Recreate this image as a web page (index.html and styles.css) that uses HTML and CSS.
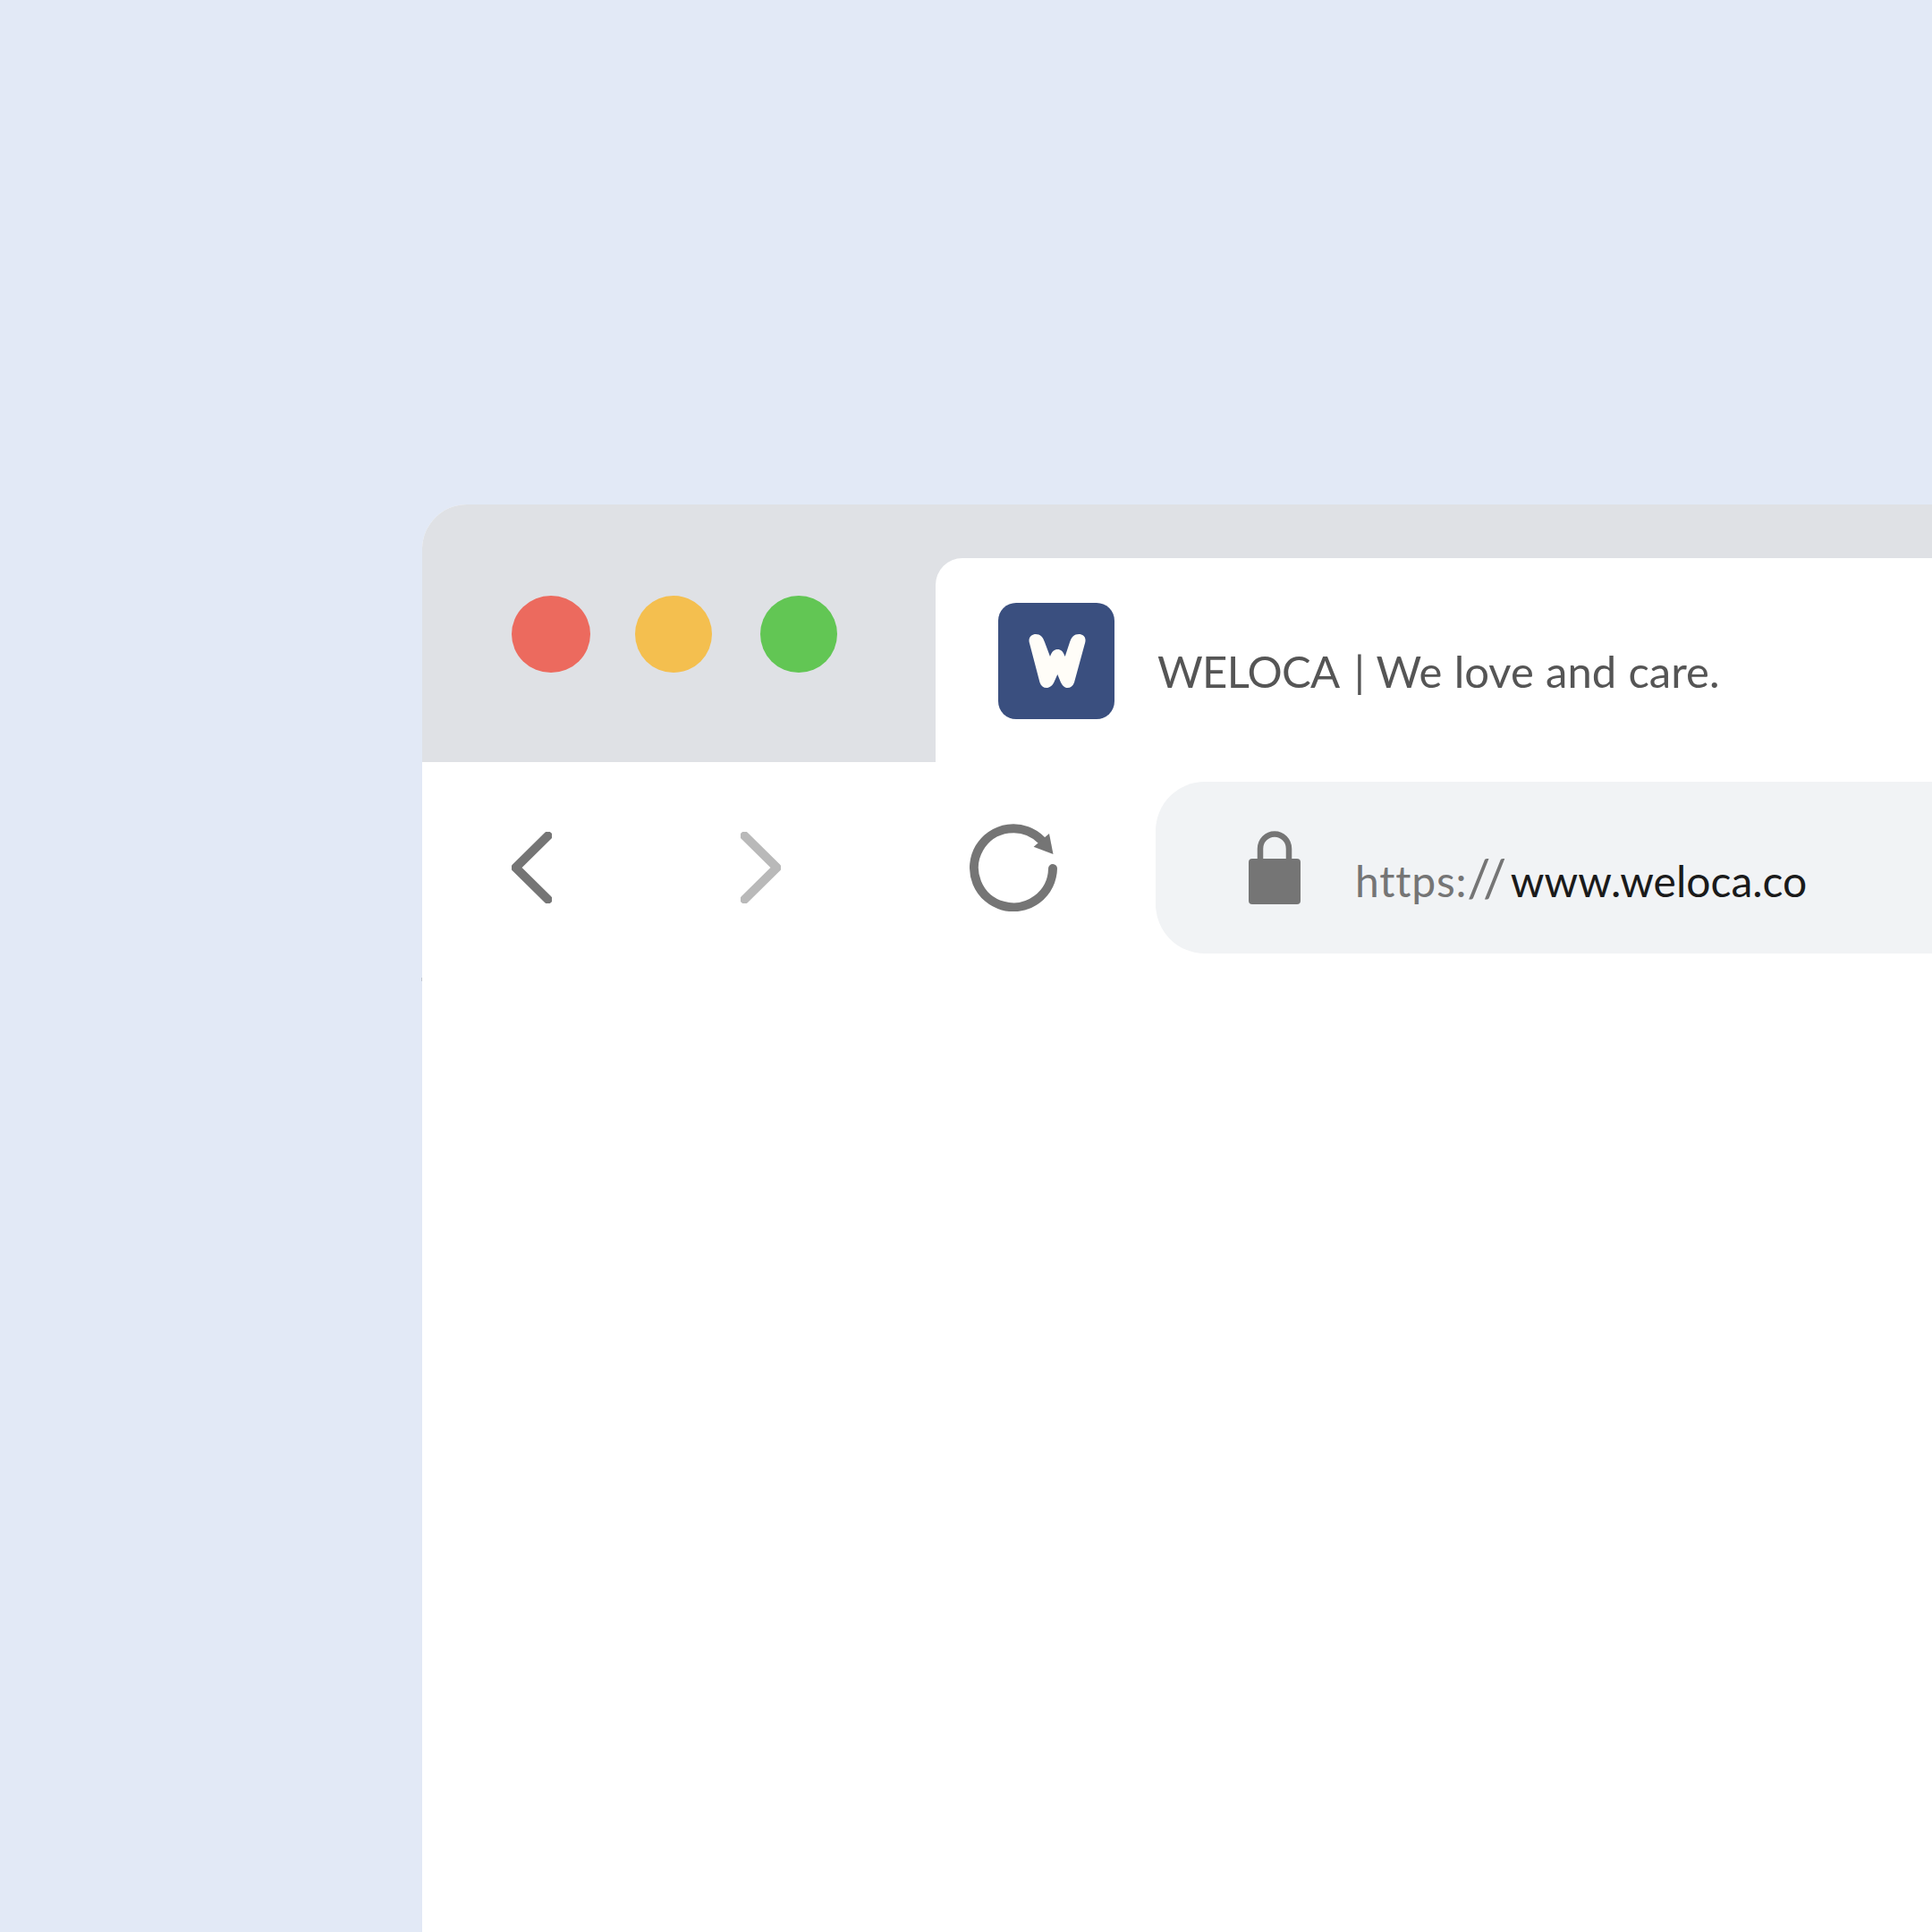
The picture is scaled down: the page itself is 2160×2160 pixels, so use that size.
FILE: index.html
```html
<!DOCTYPE html>
<html lang="en">
<head>
<meta charset="utf-8">
<title>WELOCA | We love and care.</title>
<link rel="stylesheet" href="styles.css">
</head>
<body>
<main class="stage">
  <div class="window">
    <header class="tabbar">
      <div class="lights">
        <span class="light light-red"></span>
        <span class="light light-yellow"></span>
        <span class="light light-green"></span>
      </div>
      <div class="tab">
        <span class="logo">
          <svg class="logo-mark" viewBox="0 0 130 130" width="130" height="130" aria-hidden="true"><path d="M34.7 44C33.500 38 38 35 42 35C47 35 50 38 52 44L58 60C60 54 63 52 66.300 52C70 52 72.500 54 74.700 60L80 44C82 38 85 35 90 35C95 35 98.500 38 97.300 44L85 89C83.500 93 81 95 77.300 95C74 95 72 92.500 70 89L66.300 80L62.300 89C60.500 92.500 57.500 95 54 95C50.500 95 48 93 46.500 89Z"/></svg>
        </span>
        <span class="tab-title"><span class="tab-brand">WELOCA</span> | We love and care.</span>
      </div>
    </header>
    <nav class="toolbar">
      <div class="nav-buttons">
        <svg class="chevron chevron-on" viewBox="0 0 45 80" width="45" height="80" aria-hidden="true"><path d="M40.500 4.500L4.500 40L40.500 75.500"/></svg>
        <svg class="chevron chevron-off" viewBox="0 0 45 80" width="45" height="80" aria-hidden="true"><path d="M4.500 4.500L40.500 40L4.500 75.500"/></svg>
        <svg class="reload" viewBox="0 0 98 98" width="98" height="98" aria-hidden="true"><path class="reload-arc" d="M93 50A44 44 0 1 1 80 18"/><path class="reload-head" d="M93.500 34L89 11L71.600 25.700Z"/></svg>
      </div>
      <div class="address">
        <svg class="lock" viewBox="0 0 60 82" width="60" height="82" aria-hidden="true"><path class="lock-shackle" d="M14 34V20A16 16.500 0 0 1 46 20V34"/><rect class="lock-body" x="1" y="31" width="58" height="51" rx="4"/></svg>
        <span class="url"><span class="url-scheme">https:<span class="url-slashes">//</span></span>www.weloca.co</span>
      </div>
    </nav>
  </div>
</main>
</body>
</html>
```
FILE: styles.css
```css
* { box-sizing: border-box; }
html, body { margin: 0; padding: 0; }
body { background: #e2e9f6; font-family: "Lato", "Liberation Sans", sans-serif; }

.stage {
  position: relative;
  width: 2160px;
  height: 2160px;
  padding: 564px 0 0 472px;
  overflow: hidden;
}
.stage::before {
  content: "";
  position: absolute;
  left: 471px;
  top: 1093px;
  width: 1px;
  height: 4px;
  background: #c3c8d2;
}
.window {
  width: 1688px;
  height: 1596px;
  background: #fff;
  border-top-left-radius: 50px;
  overflow: hidden;
}

.tabbar {
  display: flex;
  align-items: flex-end;
  height: 288px;
  background: #dfe1e5;
}
.lights {
  display: flex;
  align-self: flex-start;
  width: 574px;
  padding: 102px 0 0 100px;
  gap: 50px;
}
.light { width: 86px; height: 86px; border-radius: 50%; }
.light-red { width: 88px; background: #ec6a5e; }
.light-yellow { background: #f4bf4f; }
.light-green { margin-left: 4px; background: #62c654; }

.tab {
  display: flex;
  flex: 1;
  align-items: flex-start;
  height: 228px;
  padding: 50px 0 0 70px;
  background: #fff;
  border-top-left-radius: 30px;
}
.logo {
  display: block;
  width: 130px;
  height: 130px;
  background: #3a4f7f;
  border-radius: 20px;
}
.logo-mark { display: block; fill: #fffdf8; }
.tab-title {
  margin: 46px 0 0 48px;
  font-size: 49px;
  line-height: 60px;
  font-weight: 400;
  color: #555;
  word-spacing: 0.7px;
  white-space: nowrap;
}
.tab-brand { margin-right: 3px; letter-spacing: -0.7px; }

.toolbar {
  display: flex;
  align-items: center;
  padding: 22px 0 0 100px;
}
.nav-buttons { display: flex; align-items: center; gap: 211px; }
.chevron, .reload, .lock { display: block; flex: none; }
.chevron path { fill: none; stroke-width: 10px; stroke-linecap: round; stroke-linejoin: round; }
.chevron-on path { stroke: #757575; }
.chevron-off path { stroke: #b9b9b9; }
.reload-arc { fill: none; stroke: #757575; stroke-width: 10px; stroke-linecap: round; }
.reload-head { fill: #757575; }

.address {
  display: flex;
  flex: 1;
  align-items: center;
  height: 192px;
  margin-left: 110px;
  padding-left: 103px;
  background: #f1f3f5;
  border-radius: 55px 0 0 55px;
}
.lock-shackle { fill: none; stroke: #757575; stroke-width: 6.500px; }
.lock-body { fill: #757575; }
.url {
  margin: 30px 0 0 60px;
  font-size: 48px;
  line-height: 60px;
  color: #1a1a1a;
  white-space: nowrap;
}
.url-scheme { color: #757575; letter-spacing: 0.8px; }
.url-slashes { font-size: 58px; line-height: 0; letter-spacing: 4.500px; }
```
